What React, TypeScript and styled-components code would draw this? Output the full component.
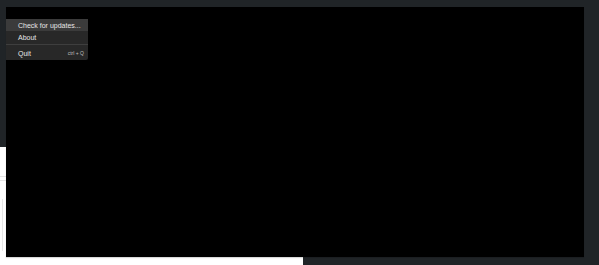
import styled, { createGlobalStyle } from "styled-components";

const GlobalStyle = createGlobalStyle`
  html, body {
    margin: 0;
    padding: 0;
    background: #ffffff;
    font-family: "Liberation Sans", Arial, sans-serif;
  }
`;

const App = () => {
  return (
    <>
      <GlobalStyle />
      <S.Screen>
        <S.TopBand />
        <S.PageBehind>
          <S.Rule $top={29} />
          <S.Rule $top={33} />
          <S.SideLine />
        </S.PageBehind>
        <S.DarkCorner />
        <S.Viewport>
          <S.Menu>
            <S.Item $active>Check for updates...</S.Item>
            <S.Item>About</S.Item>
            <S.Separator />
            <S.Item>
              Quit
              <S.Shortcut>ctrl + Q</S.Shortcut>
            </S.Item>
          </S.Menu>
        </S.Viewport>
      </S.Screen>
    </>
  );
};

const S = {
  Screen: styled.div`
    width: 599px;
    height: 265px;
    display: grid;
    grid-template-columns: 6px 297px 281px 15px;
    grid-template-rows: 7px 140px 110px 8px;
    overflow: hidden;
  `,
  TopBand: styled.div`
    grid-column: 1 / 5;
    grid-row: 1 / 3;
    background: #202427;
  `,
  PageBehind: styled.div`
    grid-column: 1 / 3;
    grid-row: 3 / 5;
    background: #ffffff;
    position: relative;
  `,
  Rule: styled.div<{ $top: number }>`
    position: absolute;
    left: 0;
    width: 6px;
    top: ${(p) => p.$top}px;
    height: 1px;
    background: #e4e4e4;
  `,
  SideLine: styled.div`
    position: absolute;
    left: 2px;
    top: 52px;
    width: 1px;
    height: 52px;
    background: #e6e6e6;
  `,
  DarkCorner: styled.div`
    grid-column: 3 / 5;
    grid-row: 3 / 5;
    background: #202427;
  `,
  Viewport: styled.div`
    grid-column: 2 / 4;
    grid-row: 2 / 4;
    background: #000000;
    position: relative;
    box-shadow: 0 1px 1px rgba(0, 0, 0, 0.15);
  `,
  Menu: styled.div`
    position: absolute;
    top: 12px;
    left: 0;
    width: 82px;
    padding: 0 0 1px;
    background: #282828;
    border-radius: 0 2px 2px 0;
    display: flex;
    flex-direction: column;
  `,
  Item: styled.div<{ $active?: boolean }>`
    height: 12px;
    padding: 0 4px 0 12px;
    display: flex;
    align-items: center;
    justify-content: space-between;
    font-size: 7px;
    color: #e6e6e6;
    background: ${(p) => (p.$active ? "#3b3b3b" : "transparent")};
    white-space: nowrap;
  `,
  Separator: styled.div`
    height: 1px;
    margin: 1px 0 2px;
    background: #3e3e3e;
  `,
  Shortcut: styled.span`
    font-size: 5px;
    color: #bdbdbd;
  `,
};

export default App;
